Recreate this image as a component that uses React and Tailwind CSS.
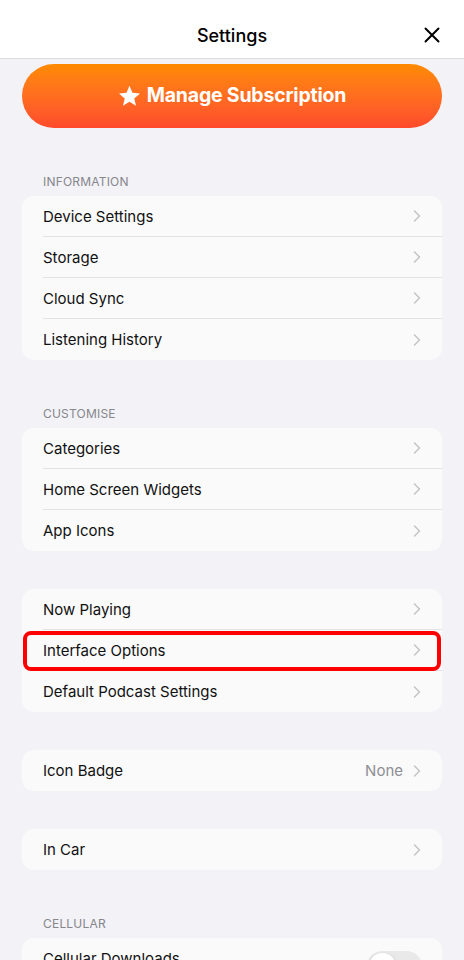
import { ChevronRight, X } from 'lucide-react'

const font = { fontFamily: 'Inter, "Noto Sans", sans-serif' }

function Row({ label, value, last, highlight, toggle }) {
  return (
    <div className="relative flex h-[41px] items-center pl-[21px]">
      <div className={`flex h-full flex-1 items-center pr-[21px] ${last ? '' : 'border-b border-[#e3e3e6]'}`}>
        <span className="flex-1 pt-[1px] text-[15px] leading-5 text-[#111]">{label}</span>
        {value && <span className="mr-[4px] pt-[1px] text-[15px] text-[#8e8e93]">{value}</span>}
        {toggle ? (
          <div className="mt-[16px] mr-[-1px] h-[31px] w-[55px] rounded-full bg-[#e9e9ea] p-[2px]">
            <div className="h-[27px] w-[27px] rounded-full bg-white shadow-[0_2px_4px_rgba(0,0,0,0.18)]" />
          </div>
        ) : (
          <ChevronRight size={20} strokeWidth={1.8} className="-mr-[6px] text-[#c4c4c7]" />
        )}
      </div>
      {highlight && (
        <div className="pointer-events-none absolute left-[1px] right-[1px] top-[1px] bottom-0 rounded-[8px] border-[4px] border-[#ff0000]" />
      )}
    </div>
  )
}

function Section({ title, rows }) {
  return (
    <div>
      {title ? (
        <div className="flex h-[68px] items-end pb-[6px] pl-[21px]">
          <span className="text-[12px] leading-4 tracking-[0.2px] text-[#86868b]">{title}</span>
        </div>
      ) : (
        <div className="h-[38px]" />
      )}
      <div className="overflow-hidden rounded-[12px] bg-[#fafafa]">
        {rows.map((r, i) => (
          <Row key={r.label} {...r} last={i === rows.length - 1} />
        ))}
      </div>
    </div>
  )
}

export default function App() {
  return (
    <div className="min-h-screen bg-[#f2f2f7]" style={font}>
      <div className="relative flex h-[59px] items-center justify-center border-b border-[#dcdce0] bg-white">
        <span className="mt-[12px] text-[18px] font-medium text-black">Settings</span>
        <X size={26} strokeWidth={1.8} className="absolute right-[19px] top-[22px] text-black" />
      </div>
      <div className="px-[22px] pb-10">
        <button className="mt-[5px] flex h-[64px] w-full items-center justify-center gap-[6px] rounded-full bg-gradient-to-b from-[#ff8a00] to-[#ff4a2c] text-white">
          <svg width="23" height="22" viewBox="0 0 24 23">
            <path d="M12 0.8l3.1 7.3 7.9 0.7-6 5.2 1.8 7.7L12 17.6l-6.8 4.1 1.8-7.7-6-5.2 7.9-0.7z" fill="white" />
          </svg>
          <span className="text-[19.5px] font-bold tracking-[-0.2px]">Manage Subscription</span>
        </button>
        <Section
          title="INFORMATION"
          rows={[
            { label: 'Device Settings' },
            { label: 'Storage' },
            { label: 'Cloud Sync' },
            { label: 'Listening History' },
          ]}
        />
        <Section
          title="CUSTOMISE"
          rows={[{ label: 'Categories' }, { label: 'Home Screen Widgets' }, { label: 'App Icons' }]}
        />
        <Section
          rows={[
            { label: 'Now Playing' },
            { label: 'Interface Options', highlight: true },
            { label: 'Default Podcast Settings' },
          ]}
        />
        <Section rows={[{ label: 'Icon Badge', value: 'None' }]} />
        <Section rows={[{ label: 'In Car' }]} />
        <Section
          title="CELLULAR"
          rows={[{ label: 'Cellular Downloads', toggle: true }, { label: 'Warn Before Using Cellular' }]}
        />
      </div>
    </div>
  )
}
